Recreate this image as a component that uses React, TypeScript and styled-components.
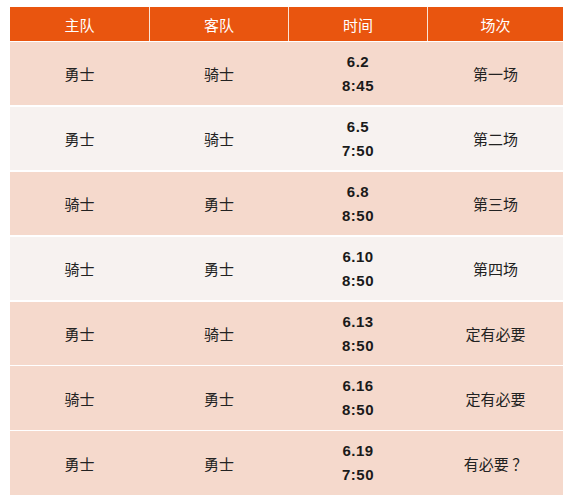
import React from "react";
import styled, { createGlobalStyle } from "styled-components";

const GlobalStyle = createGlobalStyle`
  html, body {
    margin: 0;
    padding: 0;
    background: #ffffff;
  }
  body {
    font-family: "Liberation Sans", "Noto Sans CJK SC", sans-serif;
  }
`;

const Page = styled.div`
  padding: 7px 8px 0 10px;
`;

const Table = styled.div`
  width: 553px;
  display: flex;
  flex-direction: column;
  gap: 2px;
`;

const columns = "139px 138px 138px 1fr";

const HeaderRow = styled.div`
  display: grid;
  grid-template-columns: ${columns};
  gap: 1px;
  height: 34px;
  background: #fbe3d6;
  margin-bottom: -1px;
`;

const HeaderCell = styled.div`
  background: #e9550f;
  color: #ffffff;
  font-family: "Noto Sans CJK SC", sans-serif;
  font-size: 15px;
  display: flex;
  align-items: center;
  justify-content: center;
`;

const Row = styled.div<{ $light?: boolean; $thin?: boolean }>`
  display: grid;
  grid-template-columns: ${columns};
  column-gap: 1px;
  background: ${(p) => (p.$light ? "#f7f2f0" : "#f5d9cc")};
  margin-top: ${(p) => (p.$thin ? "-1px" : "0")};
  height: ${(p) => (p.$thin ? "64px" : "63px")};
`;

const Cell = styled.div`
  display: flex;
  align-items: center;
  justify-content: center;
  color: #222222;
  font-family: "Noto Sans CJK SC", sans-serif;
  font-size: 15px;
`;

const TimeCell = styled.div`
  display: flex;
  flex-direction: column;
  align-items: center;
  justify-content: center;
  color: #1a1a1a;
  font-family: "Liberation Sans", Arial, sans-serif;
  font-weight: bold;
  font-size: 15px;
  line-height: 24px;
  letter-spacing: 0.5px;
`;

type Game = {
  home: string;
  away: string;
  date: string;
  time: string;
  label: string;
  light?: boolean;
  thin?: boolean;
};

const games: Game[] = [
  { home: "勇士", away: "骑士", date: "6.2", time: "8:45", label: "第一场" },
  { home: "勇士", away: "骑士", date: "6.5", time: "7:50", label: "第二场", light: true },
  { home: "骑士", away: "勇士", date: "6.8", time: "8:50", label: "第三场" },
  { home: "骑士", away: "勇士", date: "6.10", time: "8:50", label: "第四场", light: true },
  { home: "勇士", away: "骑士", date: "6.13", time: "8:50", label: "定有必要" },
  { home: "骑士", away: "勇士", date: "6.16", time: "8:50", label: "定有必要", thin: true },
  { home: "勇士", away: "勇士", date: "6.19", time: "7:50", label: "有必要 ？", thin: true },
];

const App: React.FC = () => (
  <>
    <GlobalStyle />
    <Page>
      <Table>
        <HeaderRow>
          <HeaderCell>主队</HeaderCell>
          <HeaderCell>客队</HeaderCell>
          <HeaderCell>时间</HeaderCell>
          <HeaderCell>场次</HeaderCell>
        </HeaderRow>
        {games.map((g, i) => (
          <Row key={i} $light={g.light} $thin={g.thin}>
            <Cell>{g.home}</Cell>
            <Cell>{g.away}</Cell>
            <TimeCell>
              <span>{g.date}</span>
              <span>{g.time}</span>
            </TimeCell>
            <Cell>{g.label}</Cell>
          </Row>
        ))}
      </Table>
    </Page>
  </>
);

export default App;
